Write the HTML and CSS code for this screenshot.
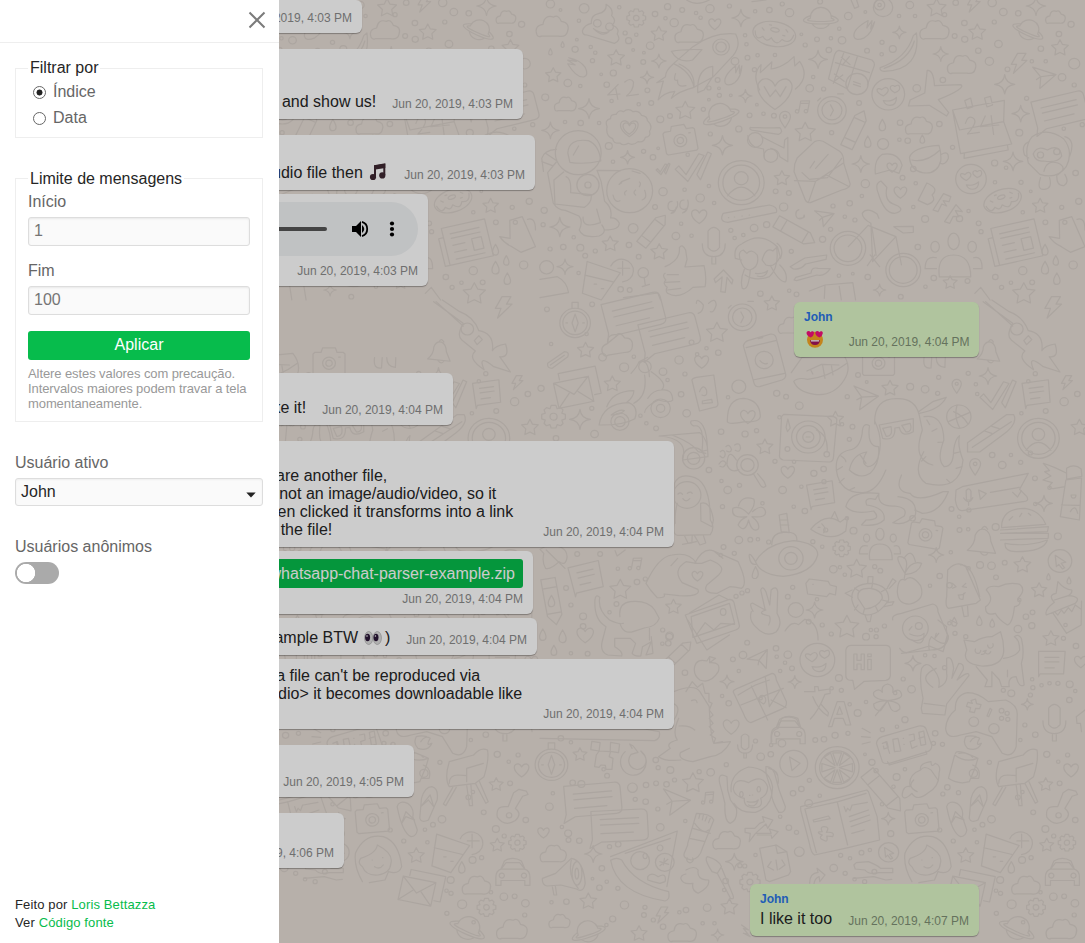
FILE: index.html
```
<!DOCTYPE html>
<html lang="pt">
<head>
<meta charset="utf-8">
<title>WhatsApp Chat Parser</title>
<link rel="stylesheet" href="styles.css">
</head>
<body>
<div class="app">
<svg class="wallpaper" width="1085" height="943" aria-hidden="true"><g id="tile"></g><use href="#tile" x="-549.5"/></svg>
<main class="chat">
  <div class="bubble b1"><time>Jun 20, 2019, 4:03 PM</time></div>
  <div class="bubble b2"><p>and show us!</p><time>Jun 20, 2019, 4:03 PM</time></div>
  <div class="bubble b3"><p>audio file then <svg class="emoji notes" width="18" height="18" viewBox="0 0 18 18"><path d="M6 13.5V3L15.3 1.5V12" fill="none" stroke="#3e2731" stroke-width="2"/><path d="M5 2.5 16.3.7V5L5 6.8Z" fill="#3e2731"/><circle cx="4" cy="14" r="3.1" fill="#3e2731"/><circle cx="13.3" cy="12.4" r="3.1" fill="#3e2731"/></svg></p><time>Jun 20, 2019, 4:03 PM</time></div>
  <div class="bubble b4 tight stacked">
    <div class="audio"><span class="track"></span>
      <svg class="volume" width="18" height="18" viewBox="0 0 18 18"><path d="M1 6h4l5-5v16l-5-5H1Z"/><path d="M11 5q4.500 4 0 8Z"/><path d="M11 1.900q5.200 1.500 5.200 7.100T11 16.100" fill="none" stroke="#000" stroke-width="1.800"/></svg>
      <svg class="more" width="6" height="18" viewBox="0 0 6 18"><circle cx="3" cy="3.500" r="2.100"/><circle cx="3" cy="9" r="2.100"/><circle cx="3" cy="14.500" r="2.100"/></svg>
    </div><time>Jun 20, 2019, 4:03 PM</time></div>
  <div class="bubble own j1"><div class="body"><strong>John</strong><p><svg class="emoji love" width="18" height="18" viewBox="0 0 18 18"><circle cx="9" cy="9.800" r="8" fill="#f5a524"/><path id="eye" d="M4.800 7.500Q1 6 .5 3.200C.6.600 3.400.500 4.500 2.200C5.500.600 8.200.900 8 3.200Q7.700 6 4.800 7.500Z" fill="#f4107c"/><use href="#eye" x="8.800"/><path d="M4 10.200h10q-.4 4.800-5 4.800t-5-4.800Z" fill="#a3145e"/><path d="M5 10.200h8v1.300H5Z" fill="#fff"/></svg></p></div><time>Jun 20, 2019, 4:04 PM</time></div>
  <div class="bubble b5"><p>like it!</p><time>Jun 20, 2019, 4:04 PM</time></div>
  <div class="bubble b6 tall"><p><span class="l1">share another file,</span><span class="l2">not an image/audio/video, so it</span><span>when clicked it transforms into a link</span><span class="l4">the file!</span></p><time>Jun 20, 2019, 4:04 PM</time></div>
  <div class="bubble b7 tight stacked"><a class="file">whatsapp-chat-parser-example.zip</a><time>Jun 20, 2019, 4:04 PM</time></div>
  <div class="bubble b8 tight"><p>example BTW <svg class="emoji eyes" width="18" height="18" viewBox="0 0 18 18"><g fill="#ddd" stroke="#aaa" stroke-width=".7"><ellipse cx="4.700" cy="10" rx="4.100" ry="6.500"/><ellipse cx="13.300" cy="10" rx="4.100" ry="6.500"/></g><ellipse cx="3.600" cy="9.500" rx="2.500" ry="3.700" fill="#2b1738"/><ellipse cx="12" cy="9.500" rx="2.500" ry="3.700" fill="#2b1738"/><circle cx="3" cy="8" r=".8" fill="#fff"/><circle cx="11.400" cy="8" r=".8" fill="#fff"/></svg> )</p><time>Jun 20, 2019, 4:04 PM</time></div>
  <div class="bubble b9 tight"><p><span class="l5">a file can't be reproduced via</span><span>&lt;audio&gt; it becomes downloadable like</span></p><time>Jun 20, 2019, 4:04 PM</time></div>
  <div class="bubble b10"><time>Jun 20, 2019, 4:05 PM</time></div>
  <div class="bubble b11"><time>Jun 20, 2019, 4:06 PM</time></div>
  <div class="bubble own j2"><div class="body"><strong>John</strong><p>I like it too</p></div><time>Jun 20, 2019, 4:07 PM</time></div>
</main>
<div class="shade"></div>
<aside class="drawer">
  <header><svg width="18" height="18" viewBox="0 0 18 18"><path d="M1.500 1.500 16.500 16.500M16.500 1.500 1.500 16.500" stroke="#7b7b7b" stroke-width="2"/></svg></header>
  <fieldset class="filter"><legend>Filtrar por</legend>
    <label><i class="radio on"></i>Índice</label>
    <label><i class="radio"></i>Data</label>
  </fieldset>
  <fieldset class="limits"><legend>Limite de mensagens</legend>
    <label>Início</label><div class="field">1</div>
    <label>Fim</label><div class="field">100</div>
    <button>Aplicar</button>
    <p>Altere estes valores com precaução. Intervalos maiores podem travar a tela momentaneamente.</p>
  </fieldset>
  <label class="caption">Usuário ativo</label>
  <div class="select"><span>John</span><svg width="10" height="6" viewBox="0 0 10 6"><path d="M.3.500H9.700L5 5.500Z" fill="#222"/></svg></div>
  <label class="caption anon">Usuários anônimos</label>
  <div class="toggle"></div>
  <footer>Feito por <a>Loris Bettazza</a><br>Ver <a>Código fonte</a></footer>
</aside>
</div>
<script src="wallpaper.js"></script>
</body>
</html>
```
FILE: styles.css
```
*{box-sizing:border-box}
body{margin:0;font:16px/18px "Liberation Sans",Arial,sans-serif;color:#262626}
p{margin:0}
.app{position:relative;width:1085px;height:943px;overflow:hidden;background:#e5dcd5}
.wallpaper{position:absolute;left:0;top:0}
.wallpaper path,.wallpaper circle{fill:none;stroke:#d7cfc8;stroke-width:1.2;vector-effect:non-scaling-stroke;stroke-linejoin:round;stroke-linecap:round}
.chat{position:relative;display:flex;flex-direction:column;align-items:flex-start;width:873px;margin-left:106px}
.bubble{display:flex;align-items:flex-end;justify-content:flex-end;gap:16px;margin-top:16px;padding:0 10px 8px;border-radius:6px;background:#fff;box-shadow:0 1px 1px rgba(0,0,0,.3);white-space:nowrap;text-align:right}
.bubble time{font-size:12px;line-height:14px;color:#8b8b8b;text-align:right}
.bubble.tight{margin-top:4px}
.bubble.stacked{flex-direction:column;align-items:flex-end;justify-content:space-between;gap:0;padding-top:8px}
.bubble p span{display:block}
.bubble.own{align-self:flex-end;background:#dcf6c6;text-align:left;justify-content:space-between}
.own .body{flex:none}
.bubble.own time{color:#7f8f75}
.own strong{display:block;font-size:12px;line-height:14px;color:#2a74e4;margin-bottom:4px}
.j1 strong{margin-bottom:6px}
.emoji{display:inline-block;vertical-align:-3px}
.love{margin-left:2px}
.notes{margin:0 1px 0 2px}
.eyes{margin:0 -2px 0 2px}
.b1{width:256px;height:33px;margin-top:0}
.b2{width:417px;height:70px}
.b3{width:429px;height:55px}
.b4{width:322px;height:92px}
.bubble.j1{width:185px;height:55px}
.b5{width:347px;height:52px}
.b6{width:568px;height:106px;gap:30px}
.b7{width:427px;height:63px}
.b8{width:431px;height:37px}
.b9{width:568px;height:70px;gap:21px}
.b9 p{margin-bottom:18px}
.b10{width:308px;height:52px}
.b11{width:238px;height:55px}
.bubble.j2{width:229px;height:52px}
.l1{padding-right:126px}
.l2{padding-right:17px}
.l4{padding-right:181px}
.l5{padding-right:42px}
.audio{display:flex;align-items:center;width:300px;height:54px;border-radius:27px;background:#f1f3f4;padding-right:23px}
.track{width:120px;height:4px;border-radius:2px;background:#555;margin-left:89px}
.volume{margin-left:24px}
.more{margin-left:auto}
.file{display:block;height:29px;line-height:29px;padding:0 8px;border-radius:3px;background:#07bc4c;color:#fff}
.shade{position:absolute;inset:0;background:rgba(0,0,0,.2)}
.drawer{position:absolute;left:0;top:0;width:279px;height:943px;display:flex;flex-direction:column;padding:0 16px 11px 15px;background:#fff;color:#666}
.drawer header{height:43px;margin:0 -16px 0 -15px;padding:11px 13px 0;border-bottom:1px solid #eee;text-align:right;line-height:0}
fieldset{min-width:0;margin:0;border:1px solid #eee;padding:0 12px}
legend{padding:0 2px;margin:0;color:#262626}
.filter{height:79px;margin-top:16px;padding-top:2px}
.filter label{display:flex;align-items:center;height:26px;padding-left:5px;gap:7px}
.radio{width:13px;height:13px;border:1px solid #666;border-radius:50%}
.radio.on{background:radial-gradient(circle,#222 0 2.7px,transparent 3.3px)}
.limits{height:254px;margin-top:30px}
.limits legend{padding-top:2px}
.limits label{display:block;margin-top:5px}
.field{height:29px;margin:6px 0 16px;padding:0 5px;border:1px solid #ddd;border-radius:3px;background:#fafafa;box-shadow:inset 0 1px 2px #e8e8e8;line-height:26px;color:#757575}
.limits .field+label{margin-top:0}
button{display:block;width:100%;height:29px;border:0;border-radius:3px;background:#07bc4c;color:#fff;font:16px/26px "Liberation Sans",Arial,sans-serif;padding:0 0 2px}
.limits p{font-size:13px;line-height:15px;letter-spacing:-.09px;color:#999;margin-top:6px}
.caption{margin-top:32px}
.select{display:flex;align-items:center;justify-content:space-between;height:28px;margin-top:6px;padding:0 6px 0 5px;border:1px solid #ddd;border-radius:3px;background:#fafafa;box-shadow:inset 0 1px 2px #eee;color:#262626}
.select svg{margin-top:6px}
.toggle{width:44px;height:22px;margin-top:6px;border-radius:11px;background:radial-gradient(circle at 11px 11px,#fff 8.800px,#aaa 9.400px)}
footer{margin-top:auto;font-size:13px;line-height:18px;letter-spacing:.13px;color:#262626}
footer a{color:#07bc4c}
```
FILE: wallpaper.js
```
// Doodle glyphs, each centred on the origin and about 20 units across.
const glyph = {
 star:"M0-10L3-4 10-3 5 2 6 9 0 6-6 9-5 2-10-3-3-4Z",
 spark:"M0-10Q1-1 10 0Q1 1 0 10Q-1 1-10 0Q-1-1 0-10Z",
 cloud:"M-10 5Q-12-1-6-2Q-5-9 1-7Q4-9 6-4Q12-3 10 3Q9 7 4 6H-7Q-9 7-10 5Z",
 heart:"M0 9C-14-1-9-9-4-8Q-1-7 0-4Q2-8 6-8C12-6 9 3 0 9Z",
 drop:"M0-10Q6 0 5 4A5 5 0 0 1-5 4Q-6 0 0-10Z",
 bolt:"M-1-10H7L3-3H8L-5 10L-2 1H-7Z",
 saturn:"M-6-1A6 6 0 0 1 6-1M-5 3A6 6 0 0 0 5 3M-6-2C-14 1-9 3 0 3S14 1 6-2M-6-.5C-10 1-6 1.500 0 1.500S10 1 6-.5",
 note:"M-4 6V-7L6-9V4M-4-4L6-6M-8 6a2 2 0 1 0 4 0a2 2 0 1 0-4 0M2 4a2 2 0 1 0 4 0a2 2 0 1 0-4 0",
 gear:"M-2-10H2L3-7 6-8 8-6 7-3 10-2V2L7 3 8 6 6 8 3 7 2 10H-2L-3 7-6 8-8 6-7 3-10 2V-2L-7-3-8-6-6-8-3-7ZM-3 0a3 3 0 1 0 6 0a3 3 0 1 0-6 0",
 love:"M-10 0a10 10 0 1 0 20 0a10 10 0 1 0-20 0M-3 1C-9-2-7-5-4-3Q-1-6 0-3Q0-1-3 1M4-1C-1-4 2-7 4-5Q7-7 7-4Q7-2 4-1M-3 4Q2 5 5 2Q5 7 1 7Q-2 7-3 4",
 camera:"M-9-6H-5L-4-9H4L5-6H9L10-5V8L9 9H-9L-10 8V-5ZM-4 1a4 4 0 1 0 8 0a4 4 0 1 0-8 0M-2 1a2 2 0 1 0 4 0a2 2 0 1 0-4 0M6-3H7",
 compass:"M-8 2a8 8 0 1 0 16 0a8 8 0 1 0-16 0M-10 2a10 10 0 1 0 20 0a10 10 0 1 0-20 0M-2-8V-12H2V-8M0-4L2 2 0 8-2 2ZM-6 2H-5M5 2H6",
 chat:"M-9-5H8Q10-5 10-3V4Q10 6 8 6H-6L-10 8-9 5ZM-6-2H7M-6 0H7M-6 3H5",
 plane:"M-10-8L10-5-1 9-2-1ZM-2-1L10-5M-2-1L-5 2",
 pencil:"M-10-3H6L10 0 6 3H-10ZM-6-3V3M5-3V3",
 mic:"M-3-8Q0-12 3-8V1Q0 5-3 1ZM-6-1Q-6 6 0 6Q6 6 6-1M-1 6V10H1V6",
 pin:"M0 9Q-7-1-6-4A6 6 0 0 1 6-4Q6 0 0 9M-2-4a2 2 0 1 0 4 0a2 2 0 1 0-4 0",
 donut:"M-10 0a10 6 0 1 0 20 0a10 6 0 1 0-20 0M-9 0Q-8 5-5 2Q-3 5-1 2Q2 6 4 2Q8 4 9-1M-2-2a2 1 0 1 0 4 0a2 1 0 1 0-4 0M-6-2L-5-1M5-3L6-2M-3-4H-2M4 0H5",
 mail:"M-10-5H6V7H-10ZM-10-5L-2 2 6-5M-10 7L-4 1M6 7L0 1M-7-6V-9H10V4H7",
 person:"M-10 0a10 10 0 1 0 20 0a10 10 0 1 0-20 0M-8 0a8 8 0 1 0 16 0a8 8 0 1 0-16 0M-3-2a3 3 0 1 0 6 0a3 3 0 1 0-6 0M-6 6Q0-2 6 6",
 group:"M-5 8Q-6 0 0 0Q6 0 6 8ZM-2-5a2 3 0 1 0 4 0a2 3 0 1 0-4 0M-8-3a1.500 2 0 1 0 3 0a1.500 2 0 1 0-3 0M5-3a1.500 2 0 1 0 3 0a1.500 2 0 1 0-3 0M-6 5H-10Q-10 0-6 1M7 5H10Q10 0 7 1",
 news:"M-8-8H10V8H-8ZM-8-4H-10V8H-8M-5-5H7M-5-3H7M-5 0H0M-5 3H0M-5 6H7M3-1H7V4H3Z",
 clock:"M-10 0a10 10 0 1 0 20 0a10 10 0 1 0-20 0M-7 0a7 7 0 1 0 14 0a7 7 0 1 0-14 0M-1-4L1 0-1 4M-8-9L-10-7M4-12H8",
 hand:"M-8-8L-2-5-9-6-3-2-9-3Q-2 9 4 8Q8 7 5 0Q1-6-8-8",
 check:"M-10 1L-8-1-4 4 3-8 6-7-3 8ZM2 4L8-9 10-8 4 7Z",
 car:"M-10 3Q-10-1-7-2L-5-7Q0-10 5-7L7-2Q10-1 10 3V8H7V5H-7V8H-10ZM-7-2H7L4-6H-4ZM-8 2a1 1 0 1 0 3 0a1 1 0 1 0-3 0M5 2a1 1 0 1 0 3 0a1 1 0 1 0-3 0",
 drink:"M-8-7L6-2-2 10-10 7ZM-9-1L3 2M2-5a5 5 0 1 1 5 7M5-4H10M7-7V-1M-5 3H-4M-2 5H-1",
 sneaker:"M-10 4L6-8 9-8Q11-4 4 1L-5 8-10 8ZM-8 6L8-5M-3-1L0 0M0-3L3-2",
 clover:"M0 0Q-9-1-8-5Q-5-8-3-5Q-4-9 0-10Q4-9 3-5Q7-8 8-4Q9-1 0 0Q8 1 7 5Q4 8 2 5L0 0Q-5 0-8 2Q-8 6-4 6L0 0L-7 9",
 cursor:"M-10 0a10 10 0 1 0 20 0a10 10 0 1 0-20 0M-4-5L5 1 1 2 4 6 2 7-1 3-3 5Z",
 lemon:"M-10 0a10 10 0 1 0 20 0a10 10 0 1 0-20 0M-8 0a8 8 0 1 0 16 0a8 8 0 1 0-16 0M0-1L-2-7H2ZM0 1L-2 7H2ZM-1 0L-7-2V2ZM1 0L7-2V2ZM-1-1L-6-5-3-7ZM1-1L6-5 3-7ZM-1 1L-6 5-3 7ZM1 1L6 5 3 7Z",
 key:"M-5 0Q-10 0-9 6Q-5 12 1 8Q5 4 1 1L5-6 8-7 7-9 3-10 0-8-3 0ZM-4 5a1 1 0 1 0 3 0a1 1 0 1 0-3 0",
 bell:"M-9 6Q-4 2-4-4Q-2-9 2-8Q6-6 6 0L9 8ZM0-8Q2-12 4-8M-1 7Q2 11 4 8",
 bubble:"M-9-8H8L7 7H-8L-9 9ZM-5-4H4M-5-1H4M-5 3H1",
 fish:"M-10 2Q-2-8 6-2L10-5 9 3Q1 10-10 2M-6 1H-5M-4-1Q-1 2-3 4M1-4L3-8 5-3"
};
const NS = "http://www.w3.org/2000/svg";
const tile = document.getElementById("tile");
function add(parent, name, attrs) {
  const el = document.createElementNS(NS, name);
  for (const k in attrs) el.setAttribute(k, attrs[k]);
  parent.appendChild(el);
  return el;
}
// Each band has its own origin: glyph placements are "x y scale rotation".
function band(y, items, dots, paths) {
  const g = add(tile, "g", {transform: `matrix(.34757 0 0 .33333 540 ${y})`});
  for (const name in items)
    for (const item of items[name].split(";")) {
      const [px, py, s, r = 0] = item.trim().split(" ");
      add(g, "path", {d: glyph[name], transform: `translate(${px} ${py}) rotate(${r}) scale(${s})`});
    }
  for (const dot of dots.split(";")) {
    const [cx, cy, r] = dot.trim().split(" ");
    add(g, "circle", {cx, cy, r});
  }
  add(g, "path", {d: paths});
}
band(0, {
 star:"342 101 2.2;219 173 2.4;38 225 2.2;418 331 2.7;763 396 2.9;696 534 2.2;202 731 2.3;343 755 2.4;1141 23 2.7;1258 96 2.4;1496 143 2.4;1439 617 2.2;1180 847 2;1392 880 3.2",
 spark:"578 54 2.6;342 183 2.1;308 232 1.9;141 326 3;30 391 2.5;591 288 1.9;525 436 2.9;252 472 2;57 681 2.9;800 178 2.7;1034 97 1.9;1153 162 2.2;1337 253 2.9;1383 341 2.5;923 492 2.5;1361 484 2.8;1427 18 2.8;977 870 1.8;72 800 2.3",
 cloud:"35 82 4.4;429 103 3.9;73 314 3;1135 92 4;1213 196 3.9;1090 379 3.7;1483 53 2.7",
 heart:"503 72 1.9;458 649 2.4;1037 577 2;257 385 2.8;257 385 2;676 280 5.4;1013 502 1.6",
 saturn:"808 57 5;1405 92 4.7 25;520 348 5.4 -20",
 donut:"674 102 6.2 10;1331 602 5.6 -20",
 drop:"985 376 1.8;943 426 1.8;1100 418 1.3;1453 750 1.7;1484 782 1.5;1453 804 2;1487 837 1.8;65 134 .9;30 156 1",
 bolt:"1247 12 2.4;1377 190 3",gear:"277 54 2.7",love:"1002 283 4.7;1240 537 4.4",camera:"403 417 4.6 -10",note:"757 322 2.5 10",clock:"840 331 4.1",pin:"705 360 2.6",
 hand:"112 202 3.6;933 95 3.7 90;558 230 3.5 80",person:"579 548 6.6",pencil:"326 690 5.6 -52;735 696 6.4 30;907 387 6 -65",mic:"500 737 5.5",group:"1190 765 8.2",news:"1365 728 7.1 -13",drink:"190 832 6.8",chat:"1492 328 8 -14",check:"441 503 5.2;354 508 2",plane:"1447 235 3.5 10;818 655 2.8"
},"30 12 12;127 25 14;59 30 4;112 62 5;228 22 5;367 20 9;331 42 8;386 68 12;409 30 7;449 39 5;462 53 5;489 26 12;545 18 6;361 55 5;245 99 6;277 104 5;255 122 9;317 137 11;299 158 4;268 150 4;146 141 5;159 158 5;106 119 4;101 148 9;151 182 6;176 223 4;211 219 9;297 186 7;254 200 5;80 249 11;116 258 5;192 254 8;309 271 7;15 292 10;206 303 5;284 313 5;320 309 7;346 358 10;374 348 7;170 369 5;117 369 8;72 366 5;198 438 10;298 454 6;325 472 8;340 445 4;210 485 5;425 464 5;490 402 6;572 387 9;470 328 6;516 286 6;486 299 4;549 286 4;515 265 4;511 240 7;486 264 6;561 184 11;597 173 7;617 209 6;594 133 5;590 106 5;619 34 5;660 30 8;697 12 6;718 38 12;626 166 5;676 165 5;763 135 6;752 103 4;831 150 8;797 118 7;869 121 11;837 115 5;887 48 11;861 86 5;936 36 4;806 5 7;941 152 7;1015 147 10;983 163 5;984 127 6;776 265 11;786 231 5;816 267 6;624 314 4;603 346 7;643 341 5;673 347 7;839 398 6;918 309 7;1084 265 11;1159 240 8;1036 368 8;1034 419 5;1058 422 8;1149 372 8;1187 442 6;1261 152 8;1293 184 12;1319 132 11;1222 118 9;1193 108 7;1221 69 8;1064 15 11;1033 48 5;1079 48 5;1164 44 6;1196 8 8;1301 8 12;1333 36 11;1307 66 6;1376 40 8;1493 102 8;1441 146 8;1537 191 16;1415 184 5;1455 184 5;1528 73 9;1502 232 11;1537 255 6;1345 208 7;1400 295 6;1379 398 10;1507 386 5;1560 374 6;1308 489 9;1341 503 5;1384 547 6;1309 547 5;1412 574 4;1541 519 8;1550 604 9;1501 622 6;1389 637 5;1454 667 7;1510 667 6;936 551 12;891 610 8;926 588 5;843 618 6;877 650 5;906 660 6;701 621 12;716 579 7;678 574 7;836 688 6;813 718 9;723 754 6;652 674 9;616 684 11;585 705 5;549 691 6;560 714 5;461 594 12;501 609 5;486 558 5;416 569 5;354 575 12;331 621 7;406 671 5;268 685 14;256 735 8;391 708 11;436 707 5;284 770 7;116 743 10;97 712 5;67 741 8;29 747 6;159 753 6;130 767 7;111 819 5;232 868 8;258 870 7;12 631 9;9 674 6;634 881 8;860 827 5;900 821 4;943 831 8;717 872 5;738 883 7;1043 533 7;1074 507 8;1081 550 5;1108 657 10;1074 621 5;1207 656 9;1233 633 5;1262 670 7;1269 695 6;1087 741 8;1133 834 8;1109 860 5;1038 890 7;1230 843 7;1310 831 8;1328 862 6;1389 812 12;1416 847 7;1355 848 5;1534 795 12;110 458 66;138 555 32;138 555 9;258 572 66;521 141 24;521 141 15;912 252 32;987 22 28;977 15 15;977 15 5;886 745 51;886 745 40;1045 810 50;1045 810 40;987 432 16;619 420 22;664 467 20;165 70 11;200 80 11;1440 465 9;1487 455 9;19 802 20;297 818 15",
`M122 92Q128 74 148 70Q145 47 168 41Q193 36 190 13Q213 27 206 47Q222 62 208 75Q231 85 222 102Q235 121 214 130L135 105Q122 105 122 92M154 86Q180 104 199 95Q180 114 154 86
M378 154Q413 147 466 149L439 180Q398 192 378 154M440 140Q500 95 563 102Q580 135 556 166L499 230L443 262Q433 213 384 191ZM400 192Q447 213 443 262M384 191Q361 211 361 230L336 248 355 243 340 300Q355 278 388 274L378 295Q400 274 441 263M390 221Q382 245 396 240Q393 263 420 257M497 199Q450 205 454 278L472 270 497 230Z
M632 270Q608 223 636 194L634 218 667 186 665 207Q690 204 712 187L731 170 733 198 747 184Q778 230 735 267M645 260L662 290 678 270 691 290 708 260M860 151L955 180Q966 190 960 202L942 255M860 151Q850 153 846 170L830 237L885 267M875 155L844 250M913 170L884 266M850 188L948 218M867 172L892 194M890 170L870 195M847 222L875 244M871 225L847 244M902 245L922 252M902 253L922 260
M979 203Q1055 175 1074 107L1083 99Q1097 210 990 214Q976 212 979 203M990 205Q1062 180 1077 123M1110 250L1114 211Q1132 208 1135 257L1210 254Q1229 263 1146 299L1176 338 1170 348 1120 316 1060 318 1065 300 1107 279Z
M1187 330L1336 301 1334 365 1357 432 1210 461ZM1187 330L1207 390 1334 365M1221 461L1220 475 1347 450 1345 436M1222 302l17-8 6 27-16 5ZM1279 294l17-5 6 26-16 6ZM1224 370Q1231 345 1245 353Q1263 363 1230 402L1264 397M1281 348L1267 380 1320 375M1298 347L1305 403
M225 253L195 285 230 282M218 266L224 298M244 246Q261 231 269 246Q270 270 249 288L283 283
M193 380Q185 360 203 356Q202 342 219 343Q228 327 240 335Q254 323 268 335Q285 330 292 346Q309 348 309 362Q326 378 315 394Q320 410 303 412Q299 429 282 425Q268 438 254 430Q239 439 230 429Q211 432 209 416Q188 408 193 380
M80 459Q82 414 139 422Q170 435 175 483Q125 494 86 487ZM96 465L111 438M47 486L22 518 38 609Q51 631 73 631L112 648Q125 663 113 690Q122 716 170 708Q195 697 178 675L186 690Q230 690 228 669Q219 652 203 654Q210 625 186 604L176 545 164 511 232 512M68 516L40 540 43 612 128 622Q151 606 147 584L88 578Q91 536 75 530M124 651Q121 688 174 668L163 627M47 448Q12 450 5 475L10 514M16 460L46 481M5 485L36 497M235 548Q220 560 235 545L258 535M265 513L288 520M286 560Q292 550 286 546M245 585Q240 577 249 572M275 585Q266 577 275 570M294 600Q310 595 301 571M210 585Q215 610 230 602
M605 382Q650 385 690 383Q702 397 686 403L618 392Q600 390 605 382M598 407Q600 430 618 441L643 447 646 474M664 445Q688 450 690 470L713 485 713 412 704 420 702 444 638 410
M733 492L740 474 790 425Q808 416 824 430L862 454Q875 465 874 490L892 550Q895 563 868 570L778 608Q765 610 760 591L731 515ZM732 542L793 544 874 488M793 544L772 608M793 544L824 525 890 560M754 518L775 538 827 533 868 475M777 504L790 484M793 505L829 463
M1063 472Q1072 441 1148 436Q1155 458 1153 483Q1142 525 1100 518Q1066 510 1063 472M1070 480Q1110 490 1151 450M1155 463Q1176 450 1175 475Q1166 498 1150 489M965 522Q960 480 985 463Q1031 455 1042 496L1033 520 1007 510Z
M1405 489Q1392 440 1416 410Q1460 380 1507 417Q1536 455 1514 500Q1488 539 1438 523ZM1405 426Q1384 435 1394 465L1406 474M1510 410Q1542 420 1524 468M1419 462Q1430 435 1460 450Q1495 430 1501 468Q1490 490 1449 483Q1426 486 1419 462M1450 514Q1457 479 1490 489Q1520 503 1490 524M1440 533Q1428 572 1452 568Q1475 566 1466 533M1487 525Q1485 558 1507 557Q1524 548 1510 523
M981 543Q962 550 973 579Q990 640 1020 640Q1050 632 1030 618L1014 611Q990 600 998 562ZM1113 549L1088 601 1115 614Q1142 604 1128 585Q1150 565 1113 549M1161 581L1131 630 1145 635 1156 612 1170 618 1160 602 1177 605 1182 590ZM1197 614L1164 665 1179 670 1189 649 1205 650 1195 632 1215 635Z
M380 604a12 14 0 1 0 12 17Q390 640 377 640Q401 625 395 605M414 600a12 14 0 1 0 12 17Q423 637 410 639Q432 625 425 600M745 629a12 14 0 1 0 15 16Q765 655 745 655M527 640L660 615Q685 620 680 637L540 667Q514 665 527 640M542 653H543M559 651H560M581 648H582M602 645H603
M887 740L944 676 1024 710 957 785 952 670Q928 657 927 640Q940 620 970 642L975 655M955 682L967 766M950 765L977 800M963 765L942 797M1024 710L1040 795M1018 680L1074 679V697L1045 699Z
M360 800Q405 780 401 743Q410 730 419 750L423 778 417 801 472 797Q480 830 475 860L440 862Q400 900 367 880Q360 872 366 862Q351 850 362 840Q350 825 360 820M366 824H398M360 847L402 845M367 870L405 865M528 810L501 837 505 848 524 831 520 875 533 877 538 832 552 852 555 840Z
M583 730Q635 693 680 738Q690 800 660 830Q620 845 590 825M580 732Q556 742 562 775L580 780M682 730Q703 746 692 775M580 790Q565 755 585 750L595 760Q610 745 625 765Q633 800 604 810Q588 810 580 790M639 780Q650 740 670 753L683 740 691 770Q675 805 650 795ZM605 810Q600 875 582 865Q575 840 588 808M664 799Q690 850 707 845Q715 820 690 795M620 820Q642 823 655 812Q650 835 625 828
M720 800L746 784 762 774 825 765 823 778 764 792Q750 810 729 807ZM731 840L736 832 780 819Q780 800 800 805L835 806Q820 830 797 825L738 842ZM775 873L820 855 900 848 908 900M820 855L818 895M861 859L867 900M240 893L339 879 347 900
M1465 710L1495 715 1494 661 1530 650 1568 740 1526 757 1500 740Q1478 730 1465 710M1545 658Q1568 650 1568 690M1251 880L1268 862 1295 900M0 838L50 830Q78 845 82 878L0 893M422 0Q450 20 487 0M895 0L905 25 917 20 911 0M300 834L303 856M294 860L315 853M610 5L650 0`);
band(300, {
 star:"667 10 2.2;509 97 3;131 150 2.3;208 251 2.3;1007 264 2.3;850 357 2.3;647 440 2.3;1552 382 2.4;231 868 3;384 920 2.2;911 806 2.8;1388 794 2.4;1436 870 2.2;883 980 3.4",
 spark:"1289 228 2.5;115 358 3;1450 610 2.4;1140 765 2.2;790 930 2.4",
 heart:"465 185 2.2;713 516 2.1;453 828 1.7;130 1005 2.6;598 350 2.3",
 cloud:"221 135 4.3 -10;722 78 3.5",gear:"39 350 3.4;868 745 2.5",compass:"101 60 4.4",clock:"582 52 4",chat:"265 38 9 -14;368 98 8.7 -14",plane:"932 297 3.8 15",note:"275 793 2.4 10",person:"1434 415 6",
 check:"1318 287 5.2",mail:"108 268 6.4 -12",group:"978 732 5.9",camera:"1110 700 4.6 10;974 185 4.6",pin:"1199 260 2.2;1252 502 2.6",bubble:"1432 280 4.5 -8;812 583 4.4 -10;137 833 5.3 -14",bolt:"1515 248 2.1;1475 22 3.2",sneaker:"1300 400 7",cursor:"1496 783 3.4",fish:"832 677 5.3",bell:"1270 724 4.5;1290 155 3.6",pencil:"35 905 7 80",drop:"33 904 1.8;1192 966 1.4;1264 963 1.5;1301 970 1.3;1463 831 1;1522 842 1.1;8 1005 1.8"
},"20 28 7;150 13 7;134 102 5;32 132 5;180 172 11;242 202 13;270 170 5;400 180 12;354 215 11;417 222 6;436 127 7;452 163 5;479 145 5;513 158 8;406 283 8;422 340 11;367 240 5;3 265 9;149 325 6;157 402 11;46 415 8;289 347 5;334 385 7;306 370 5;364 465 5;486 510 8;521 395 8;590 402 9;623 392 6;541 292 5;681 280 9;708 290 7;746 317 11;689 352 5;884 290 6;915 225 7;940 246 4;1065 260 10;1108 268 11;1147 232 6;1254 253 5;1258 282 5;1405 244 5;1425 221 6;1508 305 12;1546 282 8;1455 333 7;1385 340 5;1232 220 6;1144 280 6;899 380 7;869 373 5;890 418 6;676 484 6;731 485 5;540 570 11;574 556 6;525 620 6;522 543 5;698 570 11;640 610 5;730 620 5;762 633 8;752 560 5;788 520 9;816 507 8;817 545 6;1301 465 8;1330 495 11;1383 487 6;1355 465 5;1411 459 6;1424 535 7;1466 563 5;1184 627 7;1206 650 5;1234 630 6;1207 690 7;1232 688 5;1311 681 10;1425 612 5;1490 709 10;1182 757 5;1266 795 10;1299 797 11;1337 788 7;1312 832 7;1233 805 5;1150 828 8;1122 857 5;572 720 11;605 719 7;627 718 5;658 726 6;559 760 6;520 765 5;844 808 11;863 802 5;877 824 5;963 800 6;979 812 7;902 692 10;822 690 6;812 740 5;785 725 6;883 655 5;1072 655 8;107 762 7;173 762 7;224 806 5;279 846 8;303 837 6;75 864 7;89 915 6;124 949 10;124 979 8;200 937 5;220 912 7;713 890 7;727 862 6;597 872 6;581 879 6;564 889 6;797 898 5;773 965 7;812 975 6;952 990 5;968 990 6;1178 856 8;1379 900 5;1417 937 7;1398 950 8;1415 977 9;1375 987 11;1512 975 5;372 1010 10;353 990 6;347 325 12;347 325 28;302 200 18;230 365 26;230 365 15;772 411 48;772 411 34;772 411 16;712 447 7;825 463 8;442 475 32;442 475 18;597 495 31;597 495 19;423 585 40;722 775 35;722 775 18;645 180 26;1205 350 35;1080 985 37;1090 978 10;572 260 20;736 930 22;528 741 7;1372 87 18",
`M585 137Q589 125 598 122L664 102Q676 102 679 112L707 223Q708 235 696 240L632 260Q620 262 616 250ZM593 143L681 121M613 240L704 220M633 182Q643 195 654 190M628 116L641 113
M723 218L754 172 870 160Q900 200 875 240Q845 290 790 283Q742 277 730 244Q742 231 770 238Q830 232 883 190M768 213L810 193 860 195M779 210L785 222M813 195L820 235M838 195L843 225M437 240Q438 235 450 232L500 225 512 312Q511 322 500 322L459 333ZM459 275q11-26 20-5Q483 292 466 285M467 303l27-5 2 10-29 3ZM539 365Q538 295 586 295Q632 300 634 348Q633 368 590 365Q542 375 539 365
M170 375Q180 310 255 308Q285 320 273 356Q240 376 170 375M192 320Q210 273 270 272Q270 290 250 307M205 345Q230 325 243 332Q230 345 205 345M262 220Q280 200 285 185L310 172M285 188Q310 170 315 230M320 215Q370 250 350 270Q380 265 382 300Q376 310 340 300Q302 320 301 337M301 225Q310 288 270 310M310 295Q325 270 350 270
M701 343L845 350Q855 354 854 360L844 475Q842 485 832 486L700 480Q689 477 689 468L695 350ZM713 357L708 382 712 395 720 384ZM795 390Q830 405 826 455M766 411H777M963 372Q960 294 1028 296Q1080 295 1091 345L1100 390Q1070 480 1130 495M964 365Q980 400 979 435Q975 498 943 500Q920 490 940 456Q900 462 890 510Q920 540 950 520Q979 490 974 440Q940 440 948 377Q928 365 927 400Q920 446 890 450Q847 460 853 512Q862 580 930 578Q970 575 995 510M1091 340Q1150 330 1169 292L1130 305 1088 336M1105 350Q1160 340 1162 420Q1140 480 1163 500Q1190 500 1190 450Q1195 415 1207 407Q1200 435 1217 480Q1210 575 1110 550Q1070 520 1104 455M1040 525Q1018 575 1065 580Q1085 610 1160 575L1175 575Q1150 640 1100 640L1078 630M975 580Q970 620 1020 618Q1060 622 1048 648L1015 668Q1050 680 1080 645Q1088 596 1030 590M975 580Q890 570 880 620Q900 645 960 633Q985 660 938 660L925 675Q970 680 990 660Q995 623 940 615Q930 590 965 598L974 583M976 375L1074 356 1074 395Q1040 415 1034 382L1021 384Q1023 425 986 415ZM986 385L1010 380Q1016 410 996 409ZM1041 376L1065 370Q1073 395 1053 396ZM866 468Q880 477 880 485M853 511L870 500M861 548L875 535M890 570L905 563M920 463L938 490M1113 360L1121 374M1142 386L1128 394M1159 426L1145 427M1110 470L1098 483M1190 460L1207 456M1215 500L1197 505M1180 548L1170 538
M343 408L460 398Q485 420 483 470L410 480Q430 415 343 408M380 405Q440 430 455 455L477 460M435 363Q480 350 482 450L466 454Q475 370 442 378Q430 370 435 363M519 455q12-10 14 8-3 18-15 5M535 440q10-10 16 8-2 12-14 5M560 435q15-10 17 9-2 15-15 7M515 492q11-17 20-3-5 17-17 10M565 480Q540 440 538 495Q548 520 572 509M615 523L632 552Q640 568 650 558L645 545 626 521
M387 550Q400 520 436 530Q490 540 490 660Q505 680 490 704L400 706Q380 710 387 670V550M395 610Q387 640 389 670M462 610Q490 600 499 660L495 680 463 663ZM415 706L426 730 437 729 438 706M444 706L460 735 477 729 470 706M397 582Q405 575 410 583M424 580Q434 573 438 580M411 596Q420 609 431 596M410 733L450 725
M571 618Q580 585 615 597Q622 615 600 642Q575 615 555 625Q548 657 595 650Q575 660 570 675Q590 703 600 660Q610 700 628 687Q635 670 610 650Q655 655 648 632Q640 610 611 635M1197 570L1215 560 1405 520 1380 568 1401 590Q1408 605 1390 605L1215 632Q1200 634 1195 600ZM1226 572Q1234 560 1240 574V600H1227ZM1219 594Q1234 617 1245 593M1233 606V616M1262 570L1267 598 1284 581ZM1296 577L1379 562M1360 577L1374 591 1385 572
M1505 595L1513 540 1558 534 1552 660 1497 650ZM1515 505Q1538 490 1557 507L1559 529 1515 537ZM1500 615L1553 616M1528 585a6 8 0 1 0 14 0ZM1526 635Q1540 610 1547 640M1448 490Q1480 500 1515 520M1448 490L1466 512 1452 515 1470 528 1447 540 1474 548Q1455 565 1477 566L1510 560
M1275 5L1360 70Q1340 107 1356 120L1395 153Q1370 175 1420 209Q1400 160 1448 200L1496 216 1465 170Q1495 175 1482 132Q1452 137 1444 152Q1450 100 1405 92Q1390 50 1350 35L1300 0M1392 122L1405 107 1415 119 1400 134ZM1282 5L1360 78
M1328 683Q1327 625 1395 625Q1440 632 1455 673ZM1325 690L1463 680 1460 695 1325 700M1330 700L1463 700 1462 715 1325 720M1338 730Q1400 742 1460 720Q1450 755 1370 755Q1336 755 1338 730M1350 660L1360 650M1380 650L1386 640M1405 640L1412 646
M667 735Q665 700 700 697Q740 693 739 720M688 645L710 640 717 698 694 695ZM689 660H713M691 675H716M620 785Q650 730 730 722Q800 730 799 765Q785 820 700 829Q635 825 620 785M620 785Q600 750 602 770 605 795 620 793M620 800Q600 840 622 835 635 825 620 800
M0 748L14 740Q76 730 78 770Q75 800 55 785Q30 810 16 805Q5 787 11 760L0 748M18 750L72 805M216 752L222 768 245 750M305 850Q340 770 380 765 430 755 450 790L420 785Q380 810 409 848L454 868Q465 890 400 887L357 882Q363 895 337 893L318 870ZM445 790Q470 740 500 753L570 785Q600 850 580 865Q560 860 546 860L510 880Q466 880 480 855L514 825Q540 800 490 780L465 790ZM377 797L396 775M500 753L526 775
M158 900Q160 880 172 892Q165 930 200 960Q230 975 240 970M230 950Q225 910 260 905Q310 900 330 930L343 955Q335 980 300 984L270 994Q240 1005 230 970M158 900Q155 960 190 980L180 1020M315 985V1020M418 945L545 898Q555 898 558 907L574 978Q573 987 563 990L451 1030ZM435 950L545 910 560 970 440 1012ZM431 938L515 885 540 898M450 1005L475 968 500 990 520 970 560 973M527 936m-8 0a8 10 0 1 0 16 0a8 10 0 1 0-16 0
M613 934Q600 910 611 909L648 930 635 870Q640 855 650 875L661 915 665 870Q680 855 684 875L682 940Q700 970 680 995Q650 1015 620 980Q600 960 608 935M650 930Q620 940 660 948Q665 960 658 975M765 850L775 837 829 844 835 855 853 860 850 885 833 880 825 890 770 882ZM785 853H786M705 993Q725 960 744 974L762 958Q800 965 800 1020M897 898Q895 850 955 850Q1005 857 1003 900Q975 945 940 945Q905 940 897 898M915 895Q910 863 950 865Q985 870 985 895Q970 925 935 927ZM943 850L944 830 958 830 957 850M1000 862L1015 836 1024 844 1005 865M898 870L878 880 899 892M1000 908L1018 905 1013 915 990 920M935 945L942 965 950 965 954 943M915 915L905 930M934 925L930 940M966 920L973 935M985 900L1002 905M982 875L1000 865M954 865L957 850M920 875L905 864
M1050 840Q1030 830 1028 875Q1030 915 1065 912Q1110 900 1095 857Q1070 820 1050 840M1048 835Q1054 800 1050 820Q1020 770 1034 770Q1065 770 1050 820Q1068 780 1098 790Q1090 820 1052 823M1047 775Q1070 740 1080 785M1170 890L1173 810Q1200 780 1225 800L1267 900 1255 910 1175 925Q1165 920 1170 890M1210 795Q1245 790 1265 890M1214 920L1220 950 1232 948 1230 918M1187 850L1197 860 1187 865M1225 850L1215 860 1227 862M1203 885Q1220 885 1223 878M1205 887Q1205 900 1217 898L1219 880M1320 860Q1350 845 1380 853Q1400 870 1375 895Q1390 915 1365 920Q1360 970 1345 975Q1320 960 1310 940Q1280 950 1282 920Q1310 900 1284 870Q1290 855 1320 860M1490 845Q1510 870 1530 870Q1532 880 1520 887Q1560 890 1540 910L1457 945Q1450 930 1480 907Q1460 885 1485 880ZM1480 900L1520 887M1475 938L1515 1000 1557 975 1558 903M1472 940L1480 935 1490 945 1500 930 1508 940 1520 923 1530 935 1540 915 1557 928M1015 960Q1010 945 1040 940L1130 912Q1145 915 1145 935L1175 1010Q1170 1050 1125 1050L1040 1060M1062 990L1070 980M1064 1002Q1090 1015 1105 1000Q1105 1045 1070 1020M1140 1000L1136 1015 1147 1000M1190 335Q1215 345 1230 370M1175 365L1237 337M1200 315Q1190 350 1208 385M450 10Q450 -10 470 15Q470 35 455 40M485 10Q505 -10 507 15Q500 40 490 35M22 190L70 155Q85 155 80 170L35 205Q20 205 22 190M30 195L70 166M1105 173Q1100 208 1125 204L1127 173M1140 173Q1140 200 1165 202L1166 173`);
band(620, {
 star:"1470 55 2.3;115 403 2;440 488 3;1225 706 2.3;1455 493 2;1458 675 2;139 843 2.4;285 940 2.3;545 860 2.4",
 spark:"1073 130 2.3;538 185 2;733 186 1.9;1402 253 1.7;1002 596 1.9;153 702 2.5;559 725 2.5;511 945 1.8",
 heart:"550 320 2.5;1528 450 2.3;10 638 1.8;1556 125 2",cloud:"537 663 3.8;38 703 3.6;1398 798 3.9;1500 930 4.2;56 905 2.9;409 940 3.9",gear:"604 786 2.9;1516 668 2.5;1427 862 2.7",love:"798 120 5",compass:"33 425 4.7",note:"484 535 2.3 5",camera:"1098 595 4.7 -5",lemon:"855 443 6.3",car:"714 332 4.9;1503 757 4.9",mic:"590 378 3.6;1480 308 5.5",plane:"387 550 4.2 15;637 120 3.2 -35",chat:"148 535 8.5 -5;225 613 8.5 -3",drink:"1338 690 6.8",cursor:"1003 697 2.9",key:"1505 560 5.2",clover:"1000 242 5",mail:"1240 810 6 12",saturn:"1373 927 5.4 25;139 937 5 -20",bolt:"351 885 2.4",bubble:"1475 130 4.5",drop:"1356 743 1.8;40 92 1.6;65 50 2",pencil:"400 100 4.8 -45;989 515 7.5 50"
},"60 355 8;89 367 5;94 488 8;27 560 11;37 520 5;119 492 10;193 467 7;183 448 5;266 503 14;305 495 8;334 490 7;364 493 8;333 420 8;340 443 6;375 450 10;387 480 6;458 455 6;491 457 11;536 434 6;274 538 6;304 545 8;339 567 6;346 622 11;418 603 5;81 640 10;82 660 7;113 662 8;63 621 5;225 673 8;200 680 6;178 745 8;151 776 4;192 785 5;171 803 8;224 805 6;33 847 5;76 845 8;243 855 12;302 862 6;299 885 7;209 897 9;191 915 5;326 900 6;354 920 8;401 877 5;420 870 8;481 863 11;468 910 5;502 910 5;534 783 8;530 810 5;575 737 6;589 738 6;620 705 5;746 695 14;716 623 8;738 637 6;691 590 5;773 550 11;728 520 8;775 481 6;752 507 8;805 527 5;696 370 11;635 410 11;664 403 8;665 375 5;620 363 6;792 360 7;817 358 8;849 346 9;886 340 6;865 706 6;892 715 5;925 698 7;949 690 5;962 755 7;905 778 5;934 785 6;845 744 11;878 760 6;1009 641 9;984 553 5;955 427 9;967 452 6;1026 471 10;1050 448 5;1017 500 5;935 403 4;1050 299 9;1027 320 5;985 329 6;1069 208 11;1045 177 6;1022 219 5;1108 106 5;1135 108 5;1164 143 6;914 279 10;938 246 5;891 253 5;867 211 6;860 174 10;839 205 5;713 104 11;705 128 5;691 153 5;725 145 7;679 85 8;681 110 5;596 68 7;584 105 11;555 118 7;524 228 5;543 250 8;572 153 5;417 158 8;373 47 11;369 70 8;352 71 5;137 101 7;89 100 5;991 18 6;938 50 10;967 50 6;838 42 6;1137 340 8;1132 370 6;1158 373 6;1293 427 6;1172 502 8;1204 518 6;1159 522 6;1299 598 11;1273 614 7;1250 629 5;1150 630 6;1189 663 6;1257 667 5;1324 780 10;1325 820 6;1387 720 10;1413 713 6;1312 812 5;1357 853 13;1313 880 6;1477 830 11;1508 829 7;1440 817 5;1390 907 5;1539 850 11;1537 885 6;1454 627 10;1540 600 8;1419 577 7;1478 648 6;1375 532 7;1388 516 5;1495 490 7;1458 403 9;1491 425 5;1518 405 6;1425 344 8;1395 315 6;1382 360 5;1524 193 10;1490 190 6;1466 190 5;1443 196 5;1418 203 6;1416 178 5;1411 225 6;1356 220 10;1333 211 6;1523 240 8;1540 213 5;1506 55 6;1542 78 8;1194 40 6;1225 50 6;1178 10 5;730 431 40;288 722 27;359 727 27;1306 326 15;1248 305 14;1328 272 7;1344 280 6;1328 295 6;1346 298 6;1247 460 12",
`M445 140Q450 115 480 123L488 110 505 115 488 128Q522 125 513 155Q490 193 460 180Q440 165 445 140M488 110V128M557 218Q552 210 575 202L668 160Q678 160 680 180L709 245Q710 260 700 265L607 308Q595 308 585 280ZM570 225L598 208 620 195 660 180M578 255L700 205M608 198L655 300M648 170L660 260 690 210M665 240L708 263M635 227a10 13 0 1 1 8 25Q620 240 635 227M634 230a4 5 0 1 0 3 0
M880 90Q882 77 895 76H995Q1006 76 1008 87V168Q1005 180 995 181L933 184 905 208 900 181 888 180Q879 177 880 165ZM903 102h9v19h12v-19h9v47h-9v-17h-12v17h-9ZM943 102h10v8h-10ZM943 118h10v31h-10ZM761 215L791 215 790 200 800 200 802 212 834 207 835 220 820 223Q800 275 778 297M785 230Q800 270 828 288L830 278 808 252M855 245H875L894 315H880L872 295H847L840 320H830ZM862 260L854 283 870 282Z
M1120 90Q1115 65 1126 50Q1170 90 1175 50Q1167 35 1170 20L1145 0M385 215Q445 190 460 215L487 260Q490 345 500 370L548 365Q528 405 490 410L440 425Q395 420 404 398L430 385M385 300Q410 260 382 250M399 295Q380 340 395 360Q360 370 375 385L341 410Q360 425 405 420M400 318Q430 315 445 330M420 215L438 185 453 202 468 190 475 220 486 220V245L495 250 487 270 498 285 487 295 498 310 487 320 500 335 490 345 505 355 500 370 525 365M436 242Q450 235 452 248M0 355L330 362Q348 355 343 335L300 327H0
M149 364l24 4-3 25-24-4ZM203 367l26 5-3 26-24-4ZM170 393L203 395 199 410 210 415 207 448 190 448 188 436 175 435 170 442 157 440 162 405ZM245 395a37 40 0 1 0 45-2L300 405a25 27 0 1 1-38-2L282 397 268 378 258 372 265 385M718 411L725 452 748 430Z
M667 365Q662 330 685 325L695 295Q715 283 742 295L751 325M968 370Q970 355 985 350L1090 318Q1105 316 1110 325L1127 375Q1128 390 1115 395L1015 427Q990 435 985 425ZM1000 425L1005 435 1113 402 1110 393M985 370L998 365 1002 382 990 387 988 378M995 365L1006 400M1015 358L1030 355 1038 393 1020 395ZM1045 355H1046M1047 373H1048M1062 345L1076 342 1078 360 1065 365 1070 385 1085 378M1090 337L1104 333 1110 373 1096 376ZM1090 355L1106 350M927 325L950 338M925 350L950 352M927 372L950 366
M550 515Q545 460 600 441Q660 445 669 500Q670 560 620 577Q575 580 558 550M556 507Q560 470 600 488Q640 460 655 500Q655 525 635 535Q645 565 610 563Q585 560 588 535Q560 530 556 507M579 515a5 8 0 1 0 1 0M629 500a5 8 0 1 0 1 0M596 545Q620 550 628 540Q620 565 600 555M538 470Q510 455 517 490L525 520 532 550Q530 605 547 610Q570 600 565 565L548 540 540 510ZM650 440Q665 438 675 460L688 510 706 560Q705 580 687 577 665 540 666 515L650 460ZM658 445Q690 450 685 490M603 526H604M611 525H612
M750 570L750 560 850 535 940 510 945 515 970 590 977 660 890 682 790 705Q780 700 775 670ZM855 545L885 675M762 567L858 545 938 520M762 567L795 698M786 600L830 588 835 596 788 606ZM890 590L945 570M892 605L948 585M895 620L950 600M897 640L933 630M900 555L942 547M875 560L880 575 885 565 892 572 898 555M817 620Q835 620 824 637Q850 635 842 650L825 648Q830 670 815 660Q800 655 812 645Q790 635 812 635Q805 620 817 620M1042 525Q1045 495 1065 500Q1058 465 1095 450Q1090 430 1125 425Q1125 445 1137 430Q1155 435 1148 460Q1150 500 1115 520Q1085 545 1070 520Q1045 545 1042 525M1075 480Q1055 500 1085 515M1095 450Q1105 435 1125 450L1145 480M1195 400Q1200 385 1260 415L1253 440 1235 485Q1205 495 1175 475L1193 405Q1225 430 1258 415M1205 400Q1230 395 1245 412M1245 435Q1270 445 1262 475L1240 475M1238 365Q1250 345 1265 355Q1250 380 1270 370Q1260 395 1230 385Q1215 370 1225 350Q1240 345 1255 350
M1167 325Q1170 290 1195 270 1193 225 1230 218Q1260 218 1290 245L1340 240Q1375 255 1373 285L1370 380Q1360 415 1330 400L1300 350 1255 335 1210 345Q1170 360 1167 325M1240 242l13-5 3 14 13 3-4 12-12-1-3 13-14-3 3-12-12-4 4-12 13 3ZM1286 288L1295 265 1300 269 1291 290ZM1097 265L1102 235Q1090 180 1098 145Q1110 125 1125 140Q1155 170 1147 202Q1175 190 1170 160V115Q1185 105 1190 145L1185 175 1205 130Q1220 130 1218 148L1200 180Q1235 150 1234 167L1170 252 1165 285 1100 280ZM1130 202Q1085 170 1140 145M1105 250L1165 258
M1220 60L1250 65Q1275 50 1300 50L1325 35Q1335 65 1334 95Q1330 140 1270 138Q1210 130 1228 90ZM1253 87a8 9 0 1 0 15 4M1288 75a8 9 0 1 0 15-4M1275 94L1284 91 1280 97Q1278 105 1270 103M1280 97Q1290 108 1297 95M1334 115Q1370 110 1380 90Q1380 60 1365 50Q1375 40 1385 55Q1395 100 1385 130L1393 195Q1378 205 1370 170Q1345 170 1350 200L1328 200 1322 180 1300 155 1300 200 1280 200 1287 180 1255 140M1345 150V170M1180 0L1200 10
M425 675L415 700Q410 715 435 720Q460 715 467 685L500 600Q490 580 450 580L425 670ZM430 655L475 665M440 625L490 640M445 610Q470 645 485 630M460 582L457 595M470 585L467 600M480 590L475 603M490 595L485 608M424 714a9 9 0 1 0 15 0M590 625L618 625 632 610 645 605 640 590 670 600 655 625 650 612 620 640 602 665 605 640 590 637ZM622 640L665 640 660 627 685 635 667 655 665 645 625 645M632 685L680 675 710 695 721 755 715 765 660 785 650 780ZM678 675L683 700 710 695M665 725L655 740 672 750M696 720L705 735 688 748M679 720L683 750
M203 710L395 633 365 800M205 720Q220 710 235 720Q270 790 370 815Q375 840 360 843Q220 820 203 720M245 700L375 655M345 675a8 9 0 1 0 1 0M302 700a6 8 0 1 0 1 0M310 770Q320 755 340 770Q365 755 360 785L345 790 325 785 310 780ZM358 715L355 735M345 725L370 733M368 718L345 737M420 750Q445 735 455 750Q450 780 485 780Q490 800 455 820Q435 810 440 790Q410 795 405 775Q405 765 420 762M482 710Q470 715 495 755L510 760 522 740Q515 720 482 710M510 760L548 835Q560 840 555 825L523 745M7 775L45 760 90 715Q125 720 130 790Q125 820 105 807L60 795 20 798Q5 795 7 775M90 720Q80 770 110 805M105 725a14 35 0 1 0 3 70a14 35 0 1 0-3-70M105 745a5 16 0 1 0 2 32a5 16 0 1 0-2-32M35 797L40 825 48 825 44 797
M776 790Q775 760 800 757L797 745 820 765 805 785 803 770Q790 775 788 793M903 735L910 728 945 725Q970 735 980 745H1015V758H975Q945 765 935 750L907 747ZM902 775L960 770 995 780 1012 778M1070 785Q1045 740 1050 700Q1075 640 1130 650Q1175 665 1183 740Q1175 765 1145 755L1135 780 1090 788M1113 675Q1110 700 1065 715Q1055 730 1070 740Q1080 768 1115 765Q1150 760 1152 730Q1160 700 1113 675M1098 720H1099M1128 713H1129M1105 740Q1120 750 1130 735M1170 560Q1175 540 1200 550Q1220 565 1215 590L1228 630Q1225 650 1210 650Q1185 640 1170 560M1183 610L1195 575 1220 600 1195 590ZM1240 535Q1250 500 1270 500Q1290 505 1285 540L1260 600Q1240 610 1235 595ZM1238 560L1265 525 1275 560 1260 540ZM1390 405Q1410 380 1430 390Q1435 420 1420 470L1395 490 1320 500Q1305 475 1320 425L1390 405M1320 490Q1320 465 1345 465L1370 467M1370 485V445L1418 430M1330 502L1303 552 1310 557 1340 502M1370 495L1378 557 1387 557 1382 492M1395 490L1425 550 1432 545 1407 485M1543 290L1568 270M1543 290L1545 310 1555 310 1558 335M580 915L600 930 585 925 598 942 585 940 605 950 600 945
M180 60Q170 95 195 105L235 108Q240 95 215 80L215 55 260 55 275 70 265 100Q270 110 290 108L295 80 320 65 305 105 325 100 320 50M1035 85Q1043 98 1055 98L1120 78 1160 95 1172 45M425 0L480 90 545 45`);
```
